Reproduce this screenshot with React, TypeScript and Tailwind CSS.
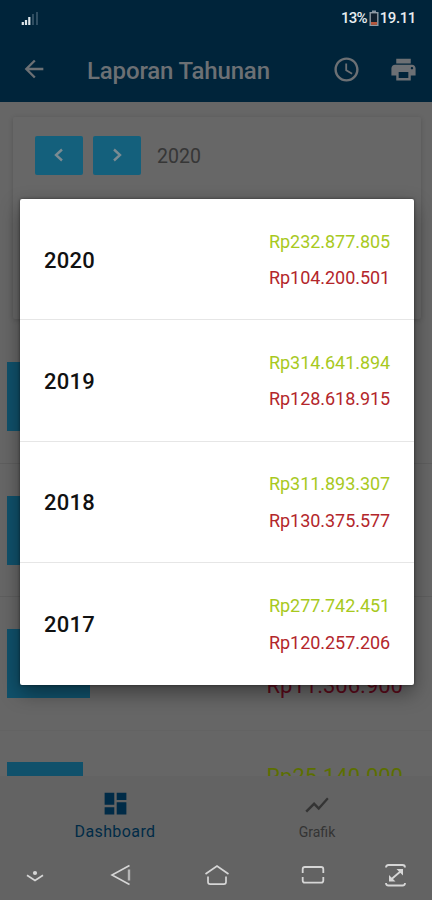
import React from 'react';
import { MdAccessTime, MdArrowBack, MdDashboard, MdPrint, MdShowChart } from 'react-icons/md';

const years = [
    { year: '2020', income: 'Rp232.877.805', expense: 'Rp104.200.501' },
    { year: '2019', income: 'Rp314.641.894', expense: 'Rp128.618.915' },
    { year: '2018', income: 'Rp311.893.307', expense: 'Rp130.375.577' },
    { year: '2017', income: 'Rp277.742.451', expense: 'Rp120.257.206' },
];

const StatusBar = () => (
    <div className="flex h-9 items-center justify-between pt-px pr-4 pl-5 text-[15px] font-medium text-[#e8edf0]">
        <svg className="-mt-px" width="20" height="16" viewBox="0 0 20 16">
            <path d="M2.8 12v3M6 10v5M9.3 7v8" stroke="#dfe6ea" strokeWidth="2.2" />
            <path d="M13 4v11M17 2v13" stroke="#355366" strokeWidth="1.8" />
        </svg>
        <div className="flex items-center">
            <span className="tracking-[-0.8px]">13%</span>
            <svg className="mr-px ml-[2px]" width="10" height="17" viewBox="0 0 10 17">
                <rect x="3" y="0.5" width="4" height="2" fill="#8393a0" />
                <rect x="1.2" y="2.7" width="7.6" height="12.6" fill="#10202e" stroke="#8f9ba5" strokeWidth="1.4" />
                <rect x="2" y="12" width="6" height="2.8" fill="#b5573c" />
            </svg>
            <span className="tracking-[-0.4px]">19.11</span>
        </div>
    </div>
);

const Header = () => (
    <header className="h-[102px] shrink-0 bg-[#00243a]">
        <StatusBar />
        <div className="flex h-[66px] items-center pr-[14px] pl-5 text-[#6c7074]">
            <MdArrowBack size={28} />
            <h1 className="mt-[3px] ml-[39px] flex-1 text-2xl font-medium tracking-[-0.15px]">Laporan Tahunan</h1>
            <MdAccessTime size={29} />
            <MdPrint className="ml-7" size={29} />
        </div>
    </header>
);

const Chevron = ({ d }: { d: string }) => (
    <div className="flex h-[39px] w-12 items-center justify-center rounded-[2px] bg-[#14607c]">
        <svg className="-mt-0.5" width="12" height="16" viewBox="0 0 12 16" fill="none" stroke="#7b8b92" strokeWidth="2.4">
            <path d={d} />
        </svg>
    </div>
);

const ReportRow = ({ tag, children }: { tag: string; children?: React.ReactNode }) => (
    <div className="flex h-[133.5px] shrink-0 justify-between border-b border-[#5e5e5e] pt-8 pr-[29px] pl-[7px] nth-4:border-[#636363]">
        <div className={`h-[69px] bg-[#10516b] ${tag}`} />
        {children}
    </div>
);

const YearDialog = () => (
    <div className="absolute top-[199px] left-5 h-[486px] w-[394px] rounded-[2px] bg-white shadow-[0_8px_20px_rgba(0,0,0,0.4),0_0_3px_rgba(0,0,0,0.5)]">
        {years.map(({ year, income, expense }) => (
            <div
                key={year}
                className="flex h-[121.3px] items-center justify-between border-b border-[#e6e6e6] px-6 pt-0.5 last:border-0"
            >
                <p className="text-[22px] font-medium tracking-[0.25px] text-[#111]">{year}</p>
                <div className="w-[121px] text-lg leading-[36.5px] tracking-[-0.05px]">
                    <p className="text-[#a8c91e]">{income}</p>
                    <p className="text-[#b3262b]">{expense}</p>
                </div>
            </div>
        ))}
    </div>
);

const BottomTabs = () => (
    <nav className="flex h-[71px] shrink-0 bg-[#636363] px-[14px]">
        <div className="flex flex-1 flex-col items-center pt-[13px] text-[#002b47]">
            <MdDashboard size={29} />
            <span className="mt-0.5 text-base leading-6 tracking-[0.4px]">Dashboard</span>
        </div>
        <div className="flex flex-1 flex-col items-center pt-[15px] text-[#343434]">
            <MdShowChart size={28} />
            <span className="mt-px text-sm leading-6">Grafik</span>
        </div>
    </nav>
);

const SystemNav = () => (
    <div className="flex h-[53px] shrink-0 items-center bg-[#636363] pt-[3px] pl-[23px] text-[#d6d6d6]">
        <svg width="24" height="24" viewBox="0 0 24 24" fill="none" stroke="currentColor" strokeWidth="1.7">
            <circle cx="12" cy="10" r="2.1" fill="currentColor" stroke="none" />
            <path d="M4 12.200l8 5.300 8-5.300" />
        </svg>
        <svg className="ml-[61px]" width="24" height="24" viewBox="0 0 24 24" fill="none" stroke="currentColor" strokeWidth="1.6">
            <path d="M21.500 2.500L4 12l17.500 9.500" />
            <path d="M21 6.500v11" stroke="#b4b4b4" strokeWidth="2.400" />
        </svg>
        <svg className="ml-[72px]" width="26" height="24" viewBox="0 0 26 24" fill="none" stroke="currentColor" strokeWidth="1.7">
            <path d="M1.500 11L13 3l11.500 8" />
            <path d="M4 13.500V19q0 2.200 2.200 2.200h13.600q2.200 0 2.200-2.200v-5.500" />
        </svg>
        <svg className="ml-[71px]" width="24" height="24" viewBox="0 0 24 24" fill="none" stroke="currentColor" strokeWidth="1.8">
            <path d="M1.700 10V6.200Q1.700 4 3.900 4h16.200q2.200 0 2.200 2.200V10M1.700 14v3.500q0 2.200 2.200 2.200h16.200q2.200 0 2.200-2.200V14" />
        </svg>
        <svg className="ml-[59px]" width="24" height="24" viewBox="0 0 24 24" fill="none" stroke="currentColor" strokeWidth="1.8">
            <path d="M2 4.500Q2 2 4.500 2h14Q21 2 21 4.500M2 20q0 2.500 2.500 2.500h14q2.500 0 2.500-2.500" />
            <path d="M7 16.500L17 8" />
            <path d="M12.500 6H19v6.500zM5 12v6.500h6.500z" fill="currentColor" stroke="none" />
        </svg>
    </div>
);

const App = () => (
    <div className="relative flex h-[900px] w-[432px] flex-col overflow-hidden bg-[#666] font-['Roboto',sans-serif]">
        <Header />
        <main className="flex min-h-0 flex-1 flex-col overflow-hidden">
            <div className="mt-[15px] mr-[11px] mb-[11px] ml-[13px] flex h-[202px] shrink-0 items-start gap-[10px] rounded-[2px] bg-[#676767] py-[19px] pl-[22px] shadow-[0_1px_5px_rgba(0,0,0,0.18)]">
                <Chevron d="M9 2.500L3 8l6 5.500" />
                <Chevron d="M3 2.500L9 8l-6 5.500" />
                <p className="ml-[6px] text-[19.5px] leading-[41px] text-[#363636]">2020</p>
            </div>
            <ReportRow tag="w-[83px]" />
            <ReportRow tag="w-[83px]" />
            <ReportRow tag="w-[83px]">
                <p className="mt-[37px] text-[22px] leading-[40px] text-[#5c0a1a]">Rp11.306.900</p>
            </ReportRow>
            <ReportRow tag="w-[76px] -mt-px">
                <p className="-mt-1.5 text-[22px] leading-[40px] text-[#5c6f00]">Rp25.140.000</p>
            </ReportRow>
        </main>
        <BottomTabs />
        <SystemNav />
        <YearDialog />
    </div>
);

export default App;
